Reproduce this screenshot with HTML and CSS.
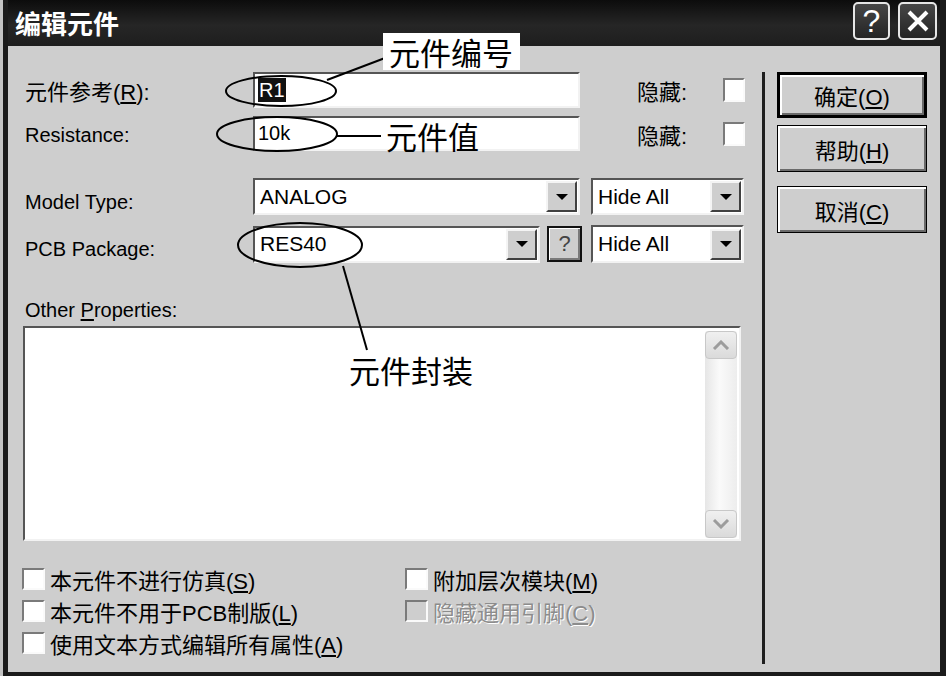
FILE: index.html
```html
<!DOCTYPE html>
<html lang="zh-CN">
<head>
    <meta charset="UTF-8">
    <title>编辑元件</title>
    <link rel="stylesheet" href="styles.css">
</head>
<body>
<div class="page">
    <div class="dialog">
        <div class="titlebar">
            <span class="title">编辑元件</span>
            <div class="title-btns">
                <span class="tbtn tbtn-help">?</span>
                <span class="tbtn tbtn-close">
                    <svg width="24" height="24" viewBox="0 0 24 24"><path d="M3 3 L21 21 M21 3 L3 21" stroke="#fff" stroke-width="4" fill="none"/></svg>
                </span>
            </div>
        </div>

        <div class="content">
            <div class="form">
                <div class="row row-ref">
                    <span class="lbl cn">元件参考(<u>R</u>):</span>
                    <div class="edit"><span class="sel">R1</span></div>
                    <span class="hide-lbl cn">隐藏:</span>
                    <span class="chk"></span>
                </div>
                <div class="row row-res">
                    <span class="lbl">Resistance:</span>
                    <div class="edit"><span>10k</span></div>
                    <span class="hide-lbl cn">隐藏:</span>
                    <span class="chk"></span>
                </div>
                <div class="row row-model">
                    <span class="lbl">Model Type:</span>
                    <div class="combo combo-model"><span class="combo-text">ANALOG</span><span class="drop"></span></div>
                    <div class="combo combo-hide"><span class="combo-text">Hide All</span><span class="drop"></span></div>
                </div>
                <div class="row row-pkg">
                    <span class="lbl">PCB Package:</span>
                    <div class="combo combo-pkg"><span class="combo-text">RES40</span><span class="drop"></span></div>
                    <span class="qbtn">?</span>
                    <div class="combo combo-hide combo-hide2"><span class="combo-text">Hide All</span><span class="drop"></span></div>
                </div>

                <div class="other-lbl">Other <u>P</u>roperties:</div>
                <div class="memo">
                    <div class="scroll">
                        <span class="sbtn"><svg width="18" height="10" viewBox="0 0 18 10"><path d="M2 9 L9 2 L16 9" stroke="#9c9c9c" stroke-width="3" fill="none"/></svg></span>
                        <span class="track"></span>
                        <span class="sbtn"><svg width="18" height="10" viewBox="0 0 18 10"><path d="M2 1 L9 8 L16 1" stroke="#9c9c9c" stroke-width="3" fill="none"/></svg></span>
                    </div>
                </div>

                <div class="opts">
                    <label class="opt"><span class="box"></span><span>本元件不进行仿真(<u>S</u>)</span></label>
                    <label class="opt"><span class="box"></span><span>附加层次模块(<u>M</u>)</span></label>
                    <label class="opt"><span class="box"></span><span>本元件不用于PCB制版(<u>L</u>)</span></label>
                    <label class="opt opt-off"><span class="box"></span><span>隐藏通用引脚(<u>C</u>)</span></label>
                    <label class="opt"><span class="box"></span><span>使用文本方式编辑所有属性(<u>A</u>)</span></label>
                </div>
            </div>

            <div class="sep"></div>

            <div class="buttons">
                <span class="btn btn-default"><span>确定(<u>O</u>)</span></span>
                <span class="btn btn-help"><span>帮助(<u>H</u>)</span></span>
                <span class="btn btn-cancel"><span>取消(<u>C</u>)</span></span>
            </div>
        </div>
    </div>

    <!-- callouts drawn over the dialog -->
    <svg class="marks" width="946" height="676" viewBox="0 0 946 676">
        <ellipse cx="281" cy="91" rx="55" ry="15"/>
        <ellipse cx="277" cy="134" rx="60" ry="17"/>
        <ellipse cx="300" cy="245" rx="62" ry="22"/>
        <line x1="327" y1="80" x2="385" y2="58"/>
        <line x1="337" y1="136" x2="381" y2="136"/>
        <line x1="343" y1="266" x2="367" y2="350"/>
    </svg>
    <span class="note note-ref">元件编号</span>
    <span class="note note-val">元件值</span>
    <span class="note note-pkg">元件封装</span>
</div>
</body>
</html>
```

FILE: styles.css
```css
html, body {
    margin: 0;
    background: #c4c4c4;
}

.page {
    position: relative;
    width: 946px;
    height: 676px;
    overflow: hidden;
}

.dialog {
    margin-left: 3px;
    height: 676px;
    box-sizing: border-box;
    border-left: 5px solid #1b1b1b;
    border-right: 6px solid #1b1b1b;
    border-bottom: 4px solid #1b1b1b;
    background: #cecece;
    display: flex;
    flex-direction: column;
    font-family: "Liberation Sans", "Noto Sans CJK SC", sans-serif;
    font-size: 20px;
    color: #000;
}

u {
    text-underline-offset: 2px;
}

.cn {
    font-size: 22px;
}

/* title bar */
.titlebar {
    height: 46px;
    flex: none;
    background: linear-gradient(#0c0c0c, #262626 55%, #1e1e1e);
    display: flex;
    justify-content: space-between;
    padding: 0 3px 0 7px;
}

.title {
    font-family: "Noto Sans CJK SC", sans-serif;
    font-weight: 700;
    font-size: 26px;
    line-height: 46px;
    color: #fff;
}

.title-btns {
    display: flex;
    gap: 8px;
    padding-top: 2px;
}

.tbtn {
    height: 38px;
    box-sizing: border-box;
    border: 2px solid #e6e6e6;
    border-radius: 5px;
    background: linear-gradient(#474747, #242424);
    color: #fff;
    display: flex;
    align-items: center;
    justify-content: center;
}

.tbtn-help {
    width: 37px;
    font-family: "Liberation Sans", sans-serif;
    font-size: 32px;
}

.tbtn-close {
    width: 39px;
}

/* body */
.content {
    flex: 1;
    display: flex;
    padding: 26px 13px 8px 14px;
}

.form {
    width: 724px;
    display: flex;
    flex-direction: column;
}

.sep {
    width: 3px;
    margin-left: 16px;
    background: #1e1e1e;
}

.buttons {
    width: 150px;
    margin-left: 12px;
    display: flex;
    flex-direction: column;
}

.row {
    display: flex;
    align-items: center;
}

.row-ref { height: 36px; }
.row-res { height: 35px; margin-top: 8px; }
.row-model { height: 37px; margin-top: 27px; }
.row-pkg { height: 38px; margin-top: 10px; }

.lbl {
    width: 231px;
    padding-left: 3px;
    box-sizing: border-box;
}

.row-res .lbl {
    padding-top: 4px;
}

.row-model .lbl,
.row-pkg .lbl {
    padding-top: 11px;
}

.edit {
    width: 327px;
    height: 100%;
    box-sizing: border-box;
    background: #fff;
    border: 2px solid;
    border-color: #555 #f2f2f2 #f2f2f2 #555;
    display: flex;
    align-items: center;
    padding-left: 3px;
}

.sel {
    background: #111;
    color: #fff;
    line-height: 24px;
    padding: 0 1px;
}

.hide-lbl {
    margin-left: 57px;
    width: 86px;
}

.chk {
    width: 22px;
    height: 24px;
    box-sizing: border-box;
    background: #fff;
    border: 2px solid;
    border-color: #7a7a7a #fafafa #fafafa #7a7a7a;
}

.combo {
    height: 37px;
    box-sizing: border-box;
    background: #fff;
    border: 2px solid;
    border-color: #555 #f2f2f2 #f2f2f2 #555;
    display: flex;
    align-items: center;
    padding: 0 1px 0 5px;
}

.combo-text {
    flex: 1;
    font-size: 21px;
}

.combo-model { width: 327px; }
.combo-pkg { width: 287px; }
.combo-hide { width: 153px; margin-left: 11px; }
.combo-hide2 { margin-left: 9px; height: 38px; }

.drop {
    width: 31px;
    height: 31px;
    box-sizing: border-box;
    background: #cecece;
    border: 2px solid;
    border-color: #f4f4f4 #404040 #404040 #f4f4f4;
    display: flex;
    align-items: center;
    justify-content: center;
}

.drop::after {
    content: "";
    border-left: 6px solid transparent;
    border-right: 6px solid transparent;
    border-top: 6px solid #000;
}

.qbtn {
    margin-left: 7px;
    width: 35px;
    height: 36px;
    box-sizing: border-box;
    background: #cecece;
    border: 2px solid #111;
    box-shadow: inset 1px 1px #fff, inset -2px -2px #7a7a7a;
    color: #444;
    font-size: 22px;
    display: flex;
    align-items: center;
    justify-content: center;
}

.other-lbl {
    margin-top: 35px;
    height: 24px;
    line-height: 24px;
    padding-left: 3px;
    margin-bottom: 1px;
}

.memo {
    margin: 3px 0 0 1px;
    width: 718px;
    height: 215px;
    box-sizing: border-box;
    background: #fff;
    border: 2px solid;
    border-color: #555 #f2f2f2 #f2f2f2 #555;
    display: flex;
    justify-content: flex-end;
}

.scroll {
    width: 32px;
    margin: 3px 2px 1px 0;
    display: flex;
    flex-direction: column;
    background: linear-gradient(90deg, #e6e6e6, #fafafa 45%, #ededed);
    border-radius: 3px;
}

.sbtn {
    height: 28px;
    box-sizing: border-box;
    border: 1px solid #c8c8c8;
    border-radius: 4px;
    background: linear-gradient(#f0f0f0, #dadada);
    display: flex;
    align-items: center;
    justify-content: center;
}

.track {
    flex: 1;
}

.opts {
    margin-top: 26px;
    display: grid;
    grid-template-columns: 383px 1fr;
    grid-auto-rows: 24px;
    row-gap: 8px;
}

.opt {
    display: flex;
    align-items: center;
    gap: 5px;
    font-size: 22px;
    white-space: nowrap;
}

.box {
    width: 23px;
    height: 22px;
    box-sizing: border-box;
    background: #fff;
    border: 2px solid;
    border-color: #7a7a7a #fafafa #fafafa #7a7a7a;
}

.opt-off {
    color: #8c8c8c;
    text-shadow: 1px 1px #fff;
}

.opt-off .box {
    background: #cecece;
}

.btn {
    box-sizing: border-box;
    background: #cecece;
    border: 1px solid #000;
    box-shadow: inset 2px 2px #fff, inset -2px -2px #6a6a6a;
    display: flex;
    align-items: center;
    justify-content: center;
    font-size: 22px;
}

.btn-default {
    height: 46px;
    border-width: 3px;
}

.btn-help {
    height: 47px;
    margin-top: 7px;
}

.btn-cancel {
    height: 47px;
    margin-top: 14px;
}

/* annotations */
.marks {
    position: absolute;
    left: 0;
    top: 0;
    fill: none;
    stroke: #000;
    stroke-width: 2;
}

.note {
    position: absolute;
    font-family: "Noto Sans CJK SC", sans-serif;
    font-size: 31px;
    line-height: 37px;
    color: #000;
}

.note-ref {
    left: 383px;
    top: 33px;
    width: 131px;
    padding-left: 6px;
    background: #fff;
}

.note-val {
    left: 386px;
    top: 117px;
}

.note-pkg {
    left: 349px;
    top: 351px;
}
```
